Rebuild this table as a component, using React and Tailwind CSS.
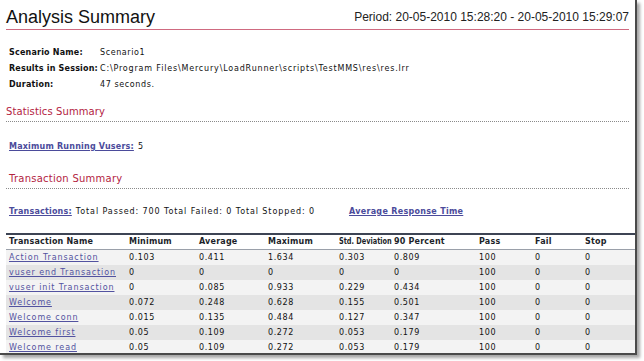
const rows = [
  ['Action Transaction', '0.103', '0.411', '1.634', '0.303', '0.809', '100', '0', '0'],
  ['vuser end Transaction', '0', '0', '0', '0', '0', '100', '0', '0'],
  ['vuser init Transaction', '0', '0.085', '0.933', '0.229', '0.434', '100', '0', '0'],
  ['Welcome', '0.072', '0.248', '0.628', '0.155', '0.501', '100', '0', '0'],
  ['Welcome conn', '0.015', '0.135', '0.484', '0.127', '0.347', '100', '0', '0'],
  ['Welcome first', '0.05', '0.109', '0.272', '0.053', '0.179', '100', '0', '0'],
  ['Welcome read', '0.05', '0.109', '0.272', '0.053', '0.179', '100', '0', '0'],
]

const headers = ['Transaction Name', 'Minimum', 'Average', 'Maximum', 'Std. Deviation', '90 Percent', 'Pass', 'Fail', 'Stop']

const gridCols = 'grid grid-cols-[120px_70px_69px_71px_55px_85px_56px_50px_1fr]'

export default function App() {
  return (
    <div className="w-[644px] h-[361px] bg-white overflow-hidden">
      <div className="w-[637px] h-[355px] bg-white border-r-2 border-b-2 border-[#4a4a4a] shadow-[3px_3px_3px_rgba(0,0,0,0.35)] overflow-hidden font-['DejaVu_Sans',sans-serif] text-[8px] tracking-[0.6px] text-[#111]">
        {/* Header */}
        <div className="ml-[6px] mr-[6px] h-[30px] flex items-end justify-between border-b border-[#cf6a80] pb-[2px] tracking-normal">
          <h1 className="font-['Liberation_Sans',Arial,sans-serif] text-[18px] leading-none text-[#111] mb-[1px]">Analysis Summary</h1>
          <div className="font-['Liberation_Sans',Arial,sans-serif] text-[12px] leading-none mb-[4px] text-[#222]">
            Period: 20-05-2010 15:28:20 - 20-05-2010 15:29:07
          </div>
        </div>

        {/* Scenario info */}
        <div className="ml-[9px] mt-[15px] flex flex-col">
          <div className="flex h-[16px] items-center">
            <span className="w-[91px] font-bold tracking-[0.2px]">Scenario Name:</span>
            <span>Scenario1</span>
          </div>
          <div className="flex h-[16px] items-center">
            <span className="w-[91px] font-bold tracking-[0.2px]">Results in Session:</span>
            <span className="tracking-[0.82px]">C:\Program Files\Mercury\LoadRunner\scripts\TestMMS\res\res.lrr</span>
          </div>
          <div className="flex h-[16px] items-center">
            <span className="w-[91px] font-bold tracking-[0.2px]">Duration:</span>
            <span>47 seconds.</span>
          </div>
        </div>

        {/* Statistics Summary */}
        <div className="ml-[6px] mr-[6px] mt-[12px] border-b border-dotted border-[#8a8a8a] pb-[3px]">
          <h2 className="text-[10px] leading-[13px] tracking-[0.1px] text-[#b3243f]">Statistics Summary</h2>
        </div>
        <div className="ml-[9px] mt-[19px] h-[12px] flex items-center">
          <span className="font-bold tracking-[0.2px] text-[#4b4b9b] underline">Maximum Running Vusers:</span>
          <span className="ml-[4px]">5</span>
        </div>

        {/* Transaction Summary */}
        <div className="ml-[6px] mr-[6px] mt-[19px] border-b border-dotted border-[#8a8a8a] pb-[3px]">
          <h2 className="ml-[3px] text-[10px] leading-[13px] tracking-[0.25px] text-[#b3243f]">Transaction Summary</h2>
        </div>
        <div className="ml-[9px] mt-[17px] h-[12px] flex items-center">
          <span className="font-bold tracking-[0.2px] text-[#4b4b9b] underline">Transactions:</span>
          <span className="ml-[4px] tracking-[0.9px]">Total Passed: 700 Total Failed: 0 Total Stopped: 0</span>
          <span className="ml-[34px] font-bold tracking-[0.3px] text-[#4b4b9b] underline">Average Response Time</span>
        </div>

        {/* Table */}
        <div className="ml-[6px] mt-[15px] border-t-2 border-[#3d4454]">
          <div className={`${gridCols} h-[15px] items-center border-b border-[#9aa0aa] font-bold tracking-[0.2px] text-[#1c1f2a]`}>
            {headers.map((h) => (
              <div key={h} className="pl-[3px] whitespace-nowrap">
                {h === 'Std. Deviation' ? (
                  <span className="inline-block origin-left scale-x-[0.82] tracking-normal">{h}</span>
                ) : h}
              </div>
            ))}
          </div>
          {rows.map((r, i) => (
            <div key={r[0]} className={`${gridCols} h-[15px] items-center ${i % 2 === 0 ? 'bg-[#f3f3f3]' : 'bg-[#e4e4e4]'}`}>
              {r.map((c, j) => (
                <div key={j} className={`pl-[3px] whitespace-nowrap ${j === 0 ? 'text-[#5252a0] underline tracking-[0.9px]' : ''}`}>{c}</div>
              ))}
            </div>
          ))}
        </div>
      </div>
    </div>
  )
}
